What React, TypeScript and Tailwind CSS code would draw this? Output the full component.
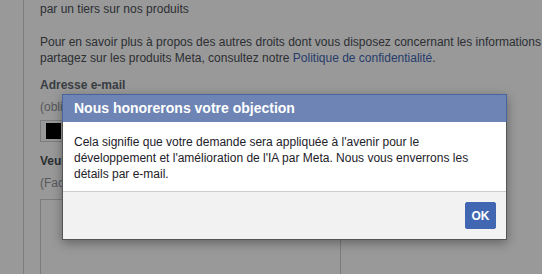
export default function App() {
  return (
    <div className="relative w-[542px] h-[274px] overflow-hidden bg-white font-['Liberation_Sans',Arial,sans-serif] text-[12px] leading-[16px] text-[#4b4f56]">
      {/* Page behind the dialog */}
      <div className="ml-[23px] h-full border-l border-[#d0d0d0] pl-[16px] pt-px">
        <p className="whitespace-nowrap">par un tiers sur nos produits</p>

        <p className="mt-[17px] whitespace-nowrap">
          Pour en savoir plus à propos des autres droits dont vous disposez concernant les informations que vous
          <br />
          partagez sur les produits Meta, consultez notre{' '}
          <span className="text-[#4267b2]">Politique de confidentialité</span>.
        </p>

        <p className="mt-[11px] font-bold text-[#606770]">Adresse e-mail</p>
        <p className="mt-[6px] text-[#90949c]">(obligatoire)</p>
        <div className="mt-[5px] w-[301px] h-[22px] border border-[#ccd0d5] pl-[5px] pt-[2px]">
          <div className="w-[15px] h-[16px] bg-black" />
        </div>

        <p className="mt-[11px] font-bold text-[#4b4f56]">Veuillez expliquer</p>
        <p className="mt-[6px] text-[#90949c]">(Facultatif)</p>
        <div className="mt-[8px] w-[301px] h-[120px] border border-[#ccd0d5]" />
      </div>

      {/* Overlay */}
      <div className="absolute inset-0 bg-black/40" />

      {/* Dialog */}
      <div className="absolute left-[62px] top-[94px] w-[445px] border border-[#555] bg-white shadow-[0_3px_10px_rgba(0,0,0,0.35)]">
        <div className="h-[28px] -mx-px -mt-px border border-b-0 border-[#4a64a0] bg-[#6d84b4] pl-[11px] text-[14px] leading-[27px] font-bold text-white">
          Nous honorerons votre objection
        </div>
        <div className="pl-[11px] pr-[10px] pt-[12px] pb-[9px] text-[#1d2129]">
          Cela signifie que votre demande sera appliquée à l'avenir pour le
          <br />
          développement et l'amélioration de l'IA par Meta. Nous vous enverrons les
          <br />
          détails par e-mail.
        </div>
        <div className="flex justify-end border-t border-[#ccc] bg-[#f2f2f2] pt-[10px] pb-[10px] pr-[10px]">
          <button className="w-[31px] h-[27px] rounded-[2px] border border-[#4267b2] bg-[#4267b2] text-[12px] font-bold text-white">
            OK
          </button>
        </div>
      </div>
    </div>
  )
}
